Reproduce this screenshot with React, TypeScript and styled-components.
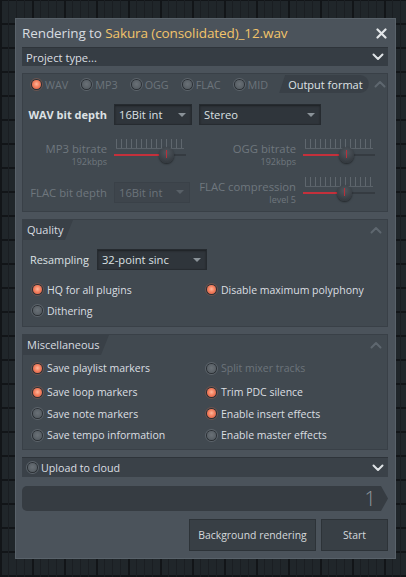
import React from "react";
import styled, { createGlobalStyle, css } from "styled-components";

const GlobalStyle = createGlobalStyle`
  html, body { margin: 0; padding: 0; }
  body {
    width: 406px;
    height: 577px;
    overflow: hidden;
    font-family: "Open Sans", "Noto Sans", sans-serif;
    background-color: #20262a;
    background-image:
      repeating-linear-gradient(90deg, #121518 0 2px, transparent 2px 32px),
      repeating-linear-gradient(90deg, #1a1e22 0 1px, transparent 1px 8px),
      repeating-linear-gradient(0deg, #121518 0 2px, transparent 2px 24px);
  }
`;

const Page = styled.div`
  padding: 18px 0 0 15px;
`;

const Dialog = styled.div`
  width: 381px;
  height: 541px;
  box-sizing: border-box;
  background: #4b535b;
  border: 1px solid #59626a;
  padding: 0 7px 0 6px;
  display: flex;
  flex-direction: column;
  color: #d4d8dc;
  font-size: 11px;
`;

const TitleBar = styled.div`
  height: 28px;
  flex: none;
  display: flex;
  align-items: center;
  justify-content: space-between;
`;

const Title = styled.div`
  font-size: 13.5px;
  color: #d8dce0;
  letter-spacing: -0.1px;
  white-space: nowrap;
`;

const FileName = styled.span`
  color: #f2c46a;
`;

const CloseBtn = styled.div`
  width: 14px;
  height: 14px;
  display: flex;
  align-items: center;
  justify-content: center;
`;

const Bar = styled.div`
  height: 19px;
  flex: none;
  box-sizing: border-box;
  background: #363d44;
  display: flex;
  align-items: center;
  justify-content: space-between;
  padding: 0 4px 0 4px;
  border-top: 1px solid #2e343a;
`;

const BarText = styled.span<{ $size: number }>`
  font-size: ${(p) => p.$size}px;
  color: #dbdfe2;
  white-space: nowrap;
`;

const Section = styled.div<{ $mt: number }>`
  margin-top: ${(p) => p.$mt}px;
  flex: none;
  background: #414950;
  border: 1px solid #394047;
  box-sizing: border-box;
`;

const SectionHeader = styled.div`
  height: 20px;
  display: flex;
  align-items: center;
  justify-content: space-between;
`;

const Tab = styled.div<{ $w: number }>`
  height: 20px;
  width: ${(p) => p.$w}px;
  background: #394047;
  clip-path: polygon(0 0, 100% 0, calc(100% - 8px) 100%, 0 100%);
  display: flex;
  align-items: center;
  padding: 0 0 1px 4px;
  box-sizing: border-box;
  color: #d8dce0;
  font-size: 11px;
  white-space: nowrap;
`;

const HeaderRight = styled.div`
  display: flex;
  align-items: center;
`;

const OutTab = styled.div`
  height: 18px;
  background: #394047;
  border-radius: 0 9px 9px 0;
  clip-path: polygon(6px 0, 100% 0, 100% 100%, 0 100%);
  display: flex;
  align-items: center;
  padding: 0 6px 0 9px;
  color: #dfe3e6;
  font-size: 11px;
  white-space: nowrap;
`;

const Chevron = styled.div`
  width: 22px;
  display: flex;
  align-items: center;
  justify-content: center;
`;

const FormatRow = styled.div`
  display: flex;
  align-items: center;
  padding-left: 6px;
`;

const FormatItem = styled.div`
  display: flex;
  align-items: center;
  gap: 2px;
  margin-right: 11px;
  color: #6c747b;
  font-size: 10.8px;
  white-space: nowrap;
`;

const radioOn = css`
  background: radial-gradient(circle at 50% 45%, #ffb69a 0%, #f3805f 45%, #d8553a 100%);
  box-shadow: 0 0 0 1px #2a2f34, 0 0 0 2px #6a5450;
`;
const radioOff = css`
  background: radial-gradient(circle at 50% 45%, #6a7177 0%, #575e64 70%, #4a5056 100%);
  box-shadow: 0 0 0 1px #2a2f34, 0 0 0 2px #5c646b;
`;

const Radio = styled.span<{ $on?: boolean }>`
  display: inline-block;
  width: 9px;
  height: 9px;
  border-radius: 50%;
  flex: none;
  margin: 2px 2px 2px 3px;
  ${(p) => (p.$on ? radioOn : radioOff)}
`;

const OutBody = styled.div`
  display: grid;
  grid-template-columns: 84px 78px 1fr 72px;
  grid-template-rows: 41px 38px 38px;
  column-gap: 7px;
  padding: 0 12px 0 0;
`;

const Label = styled.div<{ $bold?: boolean; $dim?: boolean }>`
  text-align: right;
  font-weight: ${(p) => (p.$bold ? 700 : 400)};
  color: ${(p) => (p.$dim ? "#6f777e" : "#dde1e4")};
  font-size: ${(p) => (p.$bold ? "11px" : "11.3px")};
  line-height: 15px;
  white-space: nowrap;
`;

const Sub = styled.div`
  font-size: 9px;
  line-height: 11px;
  color: #6f777e;
`;

const Cell = styled.div<{ $end?: boolean; $span?: boolean }>`
  display: flex;
  align-items: center;
  justify-content: ${(p) => (p.$end ? "flex-end" : "flex-start")};
  grid-column: ${(p) => (p.$span ? "3 / 5" : "auto")};
`;

const Select = styled.div<{ $w: number; $dim?: boolean }>`
  width: ${(p) => p.$w}px;
  height: 21px;
  box-sizing: border-box;
  background: ${(p) => (p.$dim ? "#3e454c" : "#2f353b")};
  border: 1px solid ${(p) => (p.$dim ? "#3a4148" : "#262b30")};
  box-shadow: ${(p) => (p.$dim ? "none" : "inset 0 1px 2px rgba(0,0,0,0.4)")};
  display: flex;
  align-items: center;
  justify-content: space-between;
  padding: 0 5px 0 4px;
  color: ${(p) => (p.$dim ? "#6b737a" : "#dce0e3")};
  font-size: 11.2px;
  white-space: nowrap;
`;

const Caret = styled.span<{ $dim?: boolean }>`
  width: 0;
  height: 0;
  border-left: 4px solid transparent;
  border-right: 4px solid transparent;
  border-top: 4px solid ${(p) => (p.$dim ? "#586067" : "#8a9298")};
`;

const SliderBox = styled.div`
  position: relative;
  width: 72px;
  height: 30px;
`;

const Ticks = styled.div`
  position: absolute;
  left: 2px;
  right: 2px;
  top: 0;
  height: 9px;
  background: repeating-linear-gradient(90deg, #5f676e 0 1px, transparent 1px 5px);
  border-bottom: 1px solid #5a6269;
`;

const Track = styled.div`
  position: absolute;
  left: 0;
  right: 0;
  top: 15px;
  height: 2px;
  background: #353b41;
`;

const Fill = styled.div`
  position: absolute;
  left: 0;
  top: 15px;
  height: 2px;
  background: #c4303b;
`;

const Knob = styled.div`
  position: absolute;
  top: 8px;
  width: 15px;
  height: 16px;
  margin-left: -7px;
  border-radius: 50%;
  background: radial-gradient(circle at 50% 35%, #50575e 0%, #3a4046 60%, #2c3136 100%);
  box-shadow: 0 1px 2px rgba(0, 0, 0, 0.5);
  &::after {
    content: "";
    position: absolute;
    left: 7px;
    top: 3px;
    width: 1px;
    height: 8px;
    background: #b8303a;
  }
`;

const Slider: React.FC<{ value: number }> = ({ value }) => (
  <SliderBox>
    <Ticks />
    <Track />
    <Fill style={{ width: `${value}%` }} />
    <Knob style={{ left: `${value}%` }} />
  </SliderBox>
);

const QualityBody = styled.div`
  padding: 0 0 5px 7px;
`;

const ResRow = styled.div`
  display: flex;
  align-items: center;
  gap: 8px;
  height: 21px;
  margin-top: 9px;
`;

const ResLabel = styled.div`
  color: #dde1e4;
  font-size: 10.9px;
`;

const OptGrid = styled.div<{ $rows: string; $mt: number }>`
  display: grid;
  grid-template-columns: 174px 1fr;
  grid-template-rows: ${(p) => p.$rows};
  margin-top: ${(p) => p.$mt}px;
  align-items: center;
`;

const Opt = styled.div<{ $dim?: boolean }>`
  display: flex;
  align-items: center;
  gap: 3px;
  font-size: 10.5px;
  white-space: nowrap;
  color: ${(p) => (p.$dim ? "#6c747b" : "#dbdfe2")};
`;

const MiscBody = styled.div`
  padding: 0 0 3px 7px;
`;

const CloudBar = styled(Bar)`
  margin-top: 7px;
  height: 20px;
  padding-left: 3px;
  background: #3a4148;
`;

const CloudLeft = styled.div`
  display: flex;
  align-items: center;
  gap: 2px;
  font-size: 10.7px;
  color: #dbdfe2;
`;

const Progress = styled.div`
  margin-top: 9px;
  height: 25px;
  flex: none;
  background: #363c42;
  clip-path: polygon(0 0, calc(100% - 7px) 0, 100% 50%, calc(100% - 7px) 100%, 0 100%);
  border-radius: 5px 0 0 5px;
  display: flex;
  align-items: center;
  justify-content: flex-end;
  padding-right: 12px;
  font-size: 20px;
  font-weight: 300;
  color: #8f979d;
`;

const Buttons = styled.div`
  margin-top: 8px;
  display: flex;
  justify-content: flex-end;
  gap: 5px;
`;

const Button = styled.div<{ $w: number }>`
  width: ${(p) => p.$w}px;
  height: 32px;
  box-sizing: border-box;
  background: #383f45;
  border: 1px solid #2d3338;
  display: flex;
  align-items: center;
  justify-content: center;
  font-size: 10.4px;
  color: #d5d9dc;
  white-space: nowrap;
`;

const ChevronIcon: React.FC<{ up?: boolean; color: string }> = ({ up, color }) => (
  <svg width="12" height="8" viewBox="0 0 12 8">
    <path
      d={up ? "M1.5 6.5 L6 2 L10.5 6.5" : "M1.5 1.5 L6 6 L10.5 1.5"}
      fill="none"
      stroke={color}
      strokeWidth="2"
      strokeLinecap="round"
      strokeLinejoin="round"
    />
  </svg>
);

export default function App() {
  return (
    <>
      <GlobalStyle />
      <Page>
        <Dialog>
          <TitleBar>
            <Title>
              Rendering to <FileName>Sakura (consolidated)_12.wav</FileName>
            </Title>
            <CloseBtn>
              <svg width="11" height="11" viewBox="0 0 11 11">
                <path d="M1.5 1.5 L9.5 9.5 M9.5 1.5 L1.5 9.5" stroke="#e4e7ea" strokeWidth="2.2" strokeLinecap="round" />
              </svg>
            </CloseBtn>
          </TitleBar>

          <Bar>
            <BarText $size={11.2}>Project type...</BarText>
            <ChevronIcon color="#dfe3e6" />
          </Bar>

          <Section $mt={7}>
            <SectionHeader>
              <FormatRow>
                <FormatItem><Radio $on />WAV</FormatItem>
                <FormatItem><Radio />MP3</FormatItem>
                <FormatItem><Radio />OGG</FormatItem>
                <FormatItem><Radio />FLAC</FormatItem>
                <FormatItem><Radio />MID</FormatItem>
              </FormatRow>
              <HeaderRight>
                <OutTab>Output format</OutTab>
                <Chevron><ChevronIcon up color="#5e676f" /></Chevron>
              </HeaderRight>
            </SectionHeader>
            <OutBody>
              <Cell $end><Label $bold>WAV bit depth</Label></Cell>
              <Cell><Select $w={78}>16Bit int<Caret /></Select></Cell>
              <Cell $span><Select $w={122}>Stereo<Caret /></Select></Cell>

              <Cell $end><Label $dim>MP3 bitrate<Sub>192kbps</Sub></Label></Cell>
              <Cell><Slider value={72} /></Cell>
              <Cell $end><Label $dim>OGG bitrate<Sub>192kbps</Sub></Label></Cell>
              <Cell><Slider value={60} /></Cell>

              <Cell $end><Label $dim>FLAC bit depth</Label></Cell>
              <Cell><Select $w={76} $dim>16Bit int<Caret $dim /></Select></Cell>
              <Cell $end><Label $dim>FLAC compression<Sub>level 5</Sub></Label></Cell>
              <Cell><Slider value={57} /></Cell>
            </OutBody>
          </Section>

          <Section $mt={7}>
            <SectionHeader>
              <Tab $w={50}>Quality</Tab>
              <Chevron><ChevronIcon up color="#5e676f" /></Chevron>
            </SectionHeader>
            <QualityBody>
              <ResRow>
                <ResLabel>Resampling</ResLabel>
                <Select $w={110}>32-point sinc<Caret /></Select>
              </ResRow>
              <OptGrid $rows="21px 21px" $mt={9}>
                <Opt><Radio $on />HQ for all plugins</Opt>
                <Opt><Radio $on />Disable maximum polyphony</Opt>
                <Opt><Radio />Dithering</Opt>
              </OptGrid>
            </QualityBody>
          </Section>

          <Section $mt={7}>
            <SectionHeader>
              <Tab $w={86}>Miscellaneous</Tab>
              <Chevron><ChevronIcon up color="#5e676f" /></Chevron>
            </SectionHeader>
            <MiscBody>
              <OptGrid $rows="26px 22px 21px 22px" $mt={0}>
                <Opt><Radio $on />Save playlist markers</Opt>
                <Opt $dim><Radio />Split mixer tracks</Opt>
                <Opt><Radio $on />Save loop markers</Opt>
                <Opt><Radio $on />Trim PDC silence</Opt>
                <Opt><Radio />Save note markers</Opt>
                <Opt><Radio $on />Enable insert effects</Opt>
                <Opt><Radio />Save tempo information</Opt>
                <Opt><Radio />Enable master effects</Opt>
              </OptGrid>
            </MiscBody>
          </Section>

          <CloudBar>
            <CloudLeft><Radio />Upload to cloud</CloudLeft>
            <ChevronIcon color="#dfe3e6" />
          </CloudBar>

          <Progress>1</Progress>

          <Buttons>
            <Button $w={127}>Background rendering</Button>
            <Button $w={67}>Start</Button>
          </Buttons>
        </Dialog>
      </Page>
    </>
  );
}
